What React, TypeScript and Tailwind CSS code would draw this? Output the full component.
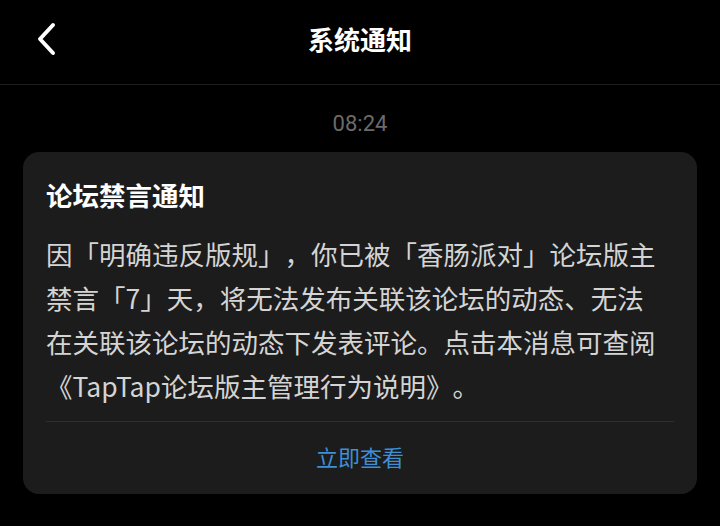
import React from 'react'

const lines = [
  '因「明确违反版规」，你已被「香肠派对」论坛版主',
  '禁言「7」天，将无法发布关联该论坛的动态、无法',
  '在关联该论坛的动态下发表评论。点击本消息可查阅',
  '《TapTap论坛版主管理行为说明》。',
]

function BackIcon() {
  return (
    <svg width="24" height="36" viewBox="0 0 24 36" fill="none">
      <path
        d="M17 4 L4 18 L17 32"
        stroke="white"
        strokeWidth="4"
        strokeLinecap="round"
        strokeLinejoin="round"
      />
    </svg>
  )
}

export default function App() {
  return (
    <div className="w-[720px] h-[526px] bg-black overflow-hidden flex flex-col font-['Noto_Sans_CJK_SC',sans-serif] [text-spacing-trim:space-all]">
      {/* Header */}
      <header className="relative h-[85px] shrink-0 flex items-center justify-center border-b border-[#1c1c1c]">
        <button type="button" className="absolute left-[36px] top-[21px]" aria-label="返回">
          <BackIcon />
        </button>
        <h1 className="text-[26px] font-bold text-white leading-[34px] -mt-[6px]">系统通知</h1>
      </header>

      {/* Timestamp */}
      <div className="pt-[27px] pb-[16px] flex justify-center">
        <span className="font-['Roboto',sans-serif] text-[22px] leading-[24px] text-[#6b6b6b]">
          08:24
        </span>
      </div>

      {/* Card */}
      <div className="mx-[23px] rounded-[16px] bg-[#1c1c1c] px-[23px]">
        <h2 className="pt-[26px] text-[26.5px] font-bold leading-[34px] text-white">论坛禁言通知</h2>
        <div className="mt-[20px] text-[26.5px] leading-[44px] text-[#d4d4d4]">
          {lines.map((l) => (
            <p key={l} className="whitespace-nowrap">{l}</p>
          ))}
        </div>
        <div className="mt-[13px] h-px bg-[#2e2e2e]" />
        <div className="h-[72px] pb-[5px] flex items-center justify-center">
          <span className="text-[22px] text-[#3d8fd6] leading-[30px]">立即查看</span>
        </div>
      </div>
    </div>
  )
}
